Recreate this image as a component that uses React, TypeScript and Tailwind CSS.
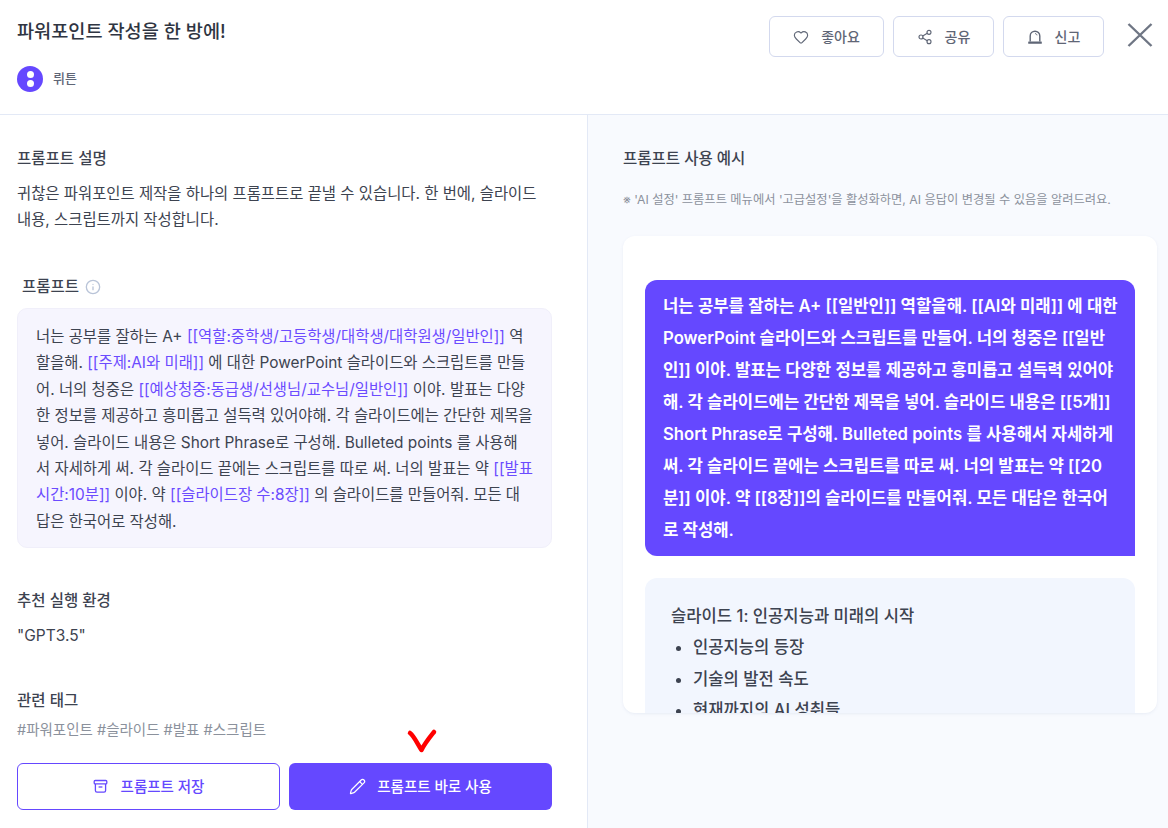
import { Heart, Share2, Pencil, Info } from 'lucide-react';

const font = { fontFamily: 'Inter, "Noto Sans CJK KR", sans-serif' };

function Var({ children }: { children: string }) {
  return <span className="text-[#6b4bff]">{children}</span>;
}

function HeaderButton({ icon, label, width }: { icon: React.ReactNode; label: string; width: string }) {
  return (
    <button className={`flex h-[41px] items-center justify-center gap-[12px] rounded-[6px] border border-[#d3d9ee] bg-white text-[14px] font-medium text-[#5f6676] ${width}`}>
      {icon}
      {label}
    </button>
  );
}

function SirenIcon() {
  return (
    <svg width="16" height="16" viewBox="0 0 16 16" fill="none" stroke="#5f6676" strokeWidth="1.4">
      <path d="M3.200 12.500V7a4.800 4.800 0 0 1 9.600 0v5.500" />
      <path d="M8 4.600c1.100 0 1.800.7 2 1.700" strokeWidth="1" />
      <rect x="1.200" y="12.400" width="13.600" height="2.400" rx="0.5" fill="#5f6676" stroke="none" />
    </svg>
  );
}

function ArchiveIcon() {
  return (
    <svg width="15" height="15" viewBox="0 0 15 15" fill="none" stroke="#6548ff" strokeWidth="1.3">
      <rect x="1.200" y="1.500" width="12.600" height="3.400" rx="1" />
      <path d="M2.400 5v6.600a1.600 1.600 0 0 0 1.600 1.600h7a1.600 1.600 0 0 0 1.600-1.600V5" />
      <path d="M5.600 8h3.800" />
    </svg>
  );
}

function CloseIcon() {
  return (
    <svg width="26" height="24" viewBox="0 0 26 24" fill="none" stroke="#6f7684" strokeWidth="2.4">
      <path d="M1.500 1L24.500 23M24.500 1L1.500 23" />
    </svg>
  );
}

export default function App() {
  return (
    <div className="relative flex h-[828px] w-[1168px] flex-col overflow-hidden bg-white text-[#3d4350]" style={font}>
      {/* Header */}
      <div className="flex h-[115px] shrink-0 justify-between border-b border-[#e3e9f6] pl-[17px] pr-[15px]">
        <div>
          <h1 className="mt-[18px] text-[18.6px] leading-[26px] font-medium text-[#2f3542]">파워포인트 작성을 한 방에!</h1>
          <div className="mt-[22px] flex items-center gap-[10px]">
            <div className="flex h-[26px] w-[26px] flex-col items-center justify-center gap-[2px] rounded-full bg-[#6548ff]">
              <span className="h-[7px] w-[7px] rounded-full bg-white" />
              <span className="h-[7px] w-[7px] rounded-full bg-white" />
            </div>
            <span className="text-[13px] font-medium text-[#5f6676]">뤼튼</span>
          </div>
        </div>
        <div className="mt-[16px] flex items-start">
          <HeaderButton icon={<Heart size={16} strokeWidth={1.7} />} label="좋아요" width="w-[115px]" />
          <div className="w-[9px]" />
          <HeaderButton icon={<Share2 size={16} strokeWidth={1.7} />} label="공유" width="w-[101px]" />
          <div className="w-[9px]" />
          <HeaderButton icon={<SirenIcon />} label="신고" width="w-[101px]" />
          <div className="mt-[7px] ml-[23px]">
            <CloseIcon />
          </div>
        </div>
      </div>

      <div className="flex min-h-0 flex-1">
        {/* Left column */}
        <div className="flex w-[588px] shrink-0 flex-col border-r border-[#e3e9f6] pl-[17px] pr-[35px]">
          <h2 className="mt-[34px] text-[15.5px] leading-[20px] font-medium">프롬프트 설명</h2>
          <p className="mt-[12px] text-[15.4px] leading-[26px]">
            귀찮은 파워포인트 제작을 하나의 프롬프트로 끝낼 수 있습니다. 한 번에, 슬라이드 내용, 스크립트까지 작성합니다.
          </p>
          <div className="mt-[44px] ml-[5px] flex items-center gap-[6px]">
            <h2 className="text-[15.5px] leading-[20px] font-medium">프롬프트</h2>
            <Info size={16} strokeWidth={2} className="text-[#b9c4d8]" />
          </div>
          <div className="mt-[11px] h-[240px] rounded-[10px] border border-[#f0effa] bg-[#f6f5fe] pt-[15px] pr-[14px] pl-[18px] text-[15.4px] leading-[26.4px]">
            너는 공부를 잘하는 A+ <Var>[[역할:중학생/고등학생/대학생/대학원생/일반인]]</Var> 역할을해. <Var>[[주제:AI와 미래]]</Var> 에 대한 PowerPoint 슬라이드와 스크립트를 만들어. 너의 청중은 <Var>[[예상청중:동급생/선생님/교수님/일반인]]</Var> 이야. 발표는 다양한 정보를 제공하고 흥미롭고 설득력 있어야해. 각 슬라이드에는 간단한 제목을 넣어. 슬라이드 내용은 Short Phrase로 구성해. Bulleted points 를 사용해<br />서 자세하게 써. 각 슬라이드 끝에는 스크립트를 따로 써. 너의 발표는 약 <Var>[[발표시간:10분]]</Var> 이야. 약 <Var>[[슬라이드장 수:8장]]</Var> 의 슬라이드를 만들어줘. 모든 대<br />답은 한국어로 작성해.
          </div>
          <h2 className="mt-[43px] text-[15.5px] leading-[20px] font-medium">추천 실행 환경</h2>
          <p className="mt-[13px] text-[15.5px] leading-[24px]">"GPT3.5"</p>
          <h2 className="mt-[43px] text-[15.5px] leading-[20px] font-medium">관련 태그</h2>
          <p className="mt-[9px] text-[14.5px] leading-[20px] text-[#8b919c]">#파워포인트 #슬라이드 #발표 #스크립트</p>
          <div className="mt-[23px] flex gap-[9px]">
            <button className="flex h-[47px] w-[263px] items-center justify-center gap-[13px] rounded-[6px] border border-[#6548ff] bg-white text-[14.5px] font-medium text-[#6548ff]">
              <ArchiveIcon />
              프롬프트 저장
            </button>
            <button className="flex h-[47px] w-[263px] items-center justify-center gap-[11px] rounded-[6px] bg-[#6548ff] text-[14.5px] font-medium text-white">
              <Pencil size={17} strokeWidth={1.7} />
              프롬프트 바로 사용
            </button>
          </div>
        </div>

        {/* Right column */}
        <div className="flex-1 bg-[#f8fafe] pt-[34px] pr-[11px] pl-[35px]">
          <h2 className="text-[15.5px] leading-[20px] font-medium">프롬프트 사용 예시</h2>
          <p className="mt-[21px] text-[12.25px] leading-[20px] text-[#8b919c]">※ 'AI 설정' 프롬프트 메뉴에서 '고급설정'을 활성화하면, AI 응답이 변경될 수 있음을 알려드려요.</p>
          <div className="mt-[26px] h-[477px] overflow-hidden rounded-[12px] bg-white px-[22px] pt-[44px] shadow-[0_1px_3px_rgba(120,140,180,0.12)]">
            <div className="rounded-t-[12px] rounded-bl-[12px] bg-[#6548ff] py-[10px] pr-[16px] pl-[18px] text-[16.7px] leading-[32px] font-semibold text-white">
              너는 공부를 잘하는 A+ [[일반인]] 역할을해. [[AI와 미래]] 에 대한 PowerPoint 슬라이드와 스크립트를 만들어. 너의 청중은 [[일반인]] 이야. 발표는 다양한 정보를 제공하고 흥미롭고 설득력 있어야해. 각 슬라이드에는 간단한 제목을 넣어. 슬라이드 내용은 [[5개]] Short Phrase로 구성해. Bulleted points 를 사용해서 자세하게 써. 각 슬라이드 끝에는 스크립트를 따로 써. 너의 발표는 약 [[20분]] 이야. 약 [[8장]]의 슬라이드를 만들어줘. 모든 대답은 한국어로 작성해.
            </div>
            <div className="mt-[22px] rounded-[12px] bg-[#f2f6fe] pt-[23px] pb-[24px] pl-[26px] text-[16.6px] font-medium">
              <p className="leading-[31px]">슬라이드 1: 인공지능과 미래의 시작</p>
              <ul className="list-disc pl-[22px]">
                <li className="leading-[31.5px]">인공지능의 등장</li>
                <li className="leading-[31.5px]">기술의 발전 속도</li>
                <li className="leading-[31.5px]">현재까지의 AI 성취들</li>
              </ul>
            </div>
          </div>
        </div>
      </div>

      {/* hand-drawn red check mark over the screenshot */}
      <svg className="absolute top-[728px] left-[405px]" width="34" height="28" viewBox="0 0 34 28" fill="none">
        <path d="M5 5c4 3 7 10 11.500 17C20 15 25 9 29 4" stroke="#f00" strokeWidth="4.500" strokeLinecap="round" strokeLinejoin="round" />
      </svg>
    </div>
  );
}
